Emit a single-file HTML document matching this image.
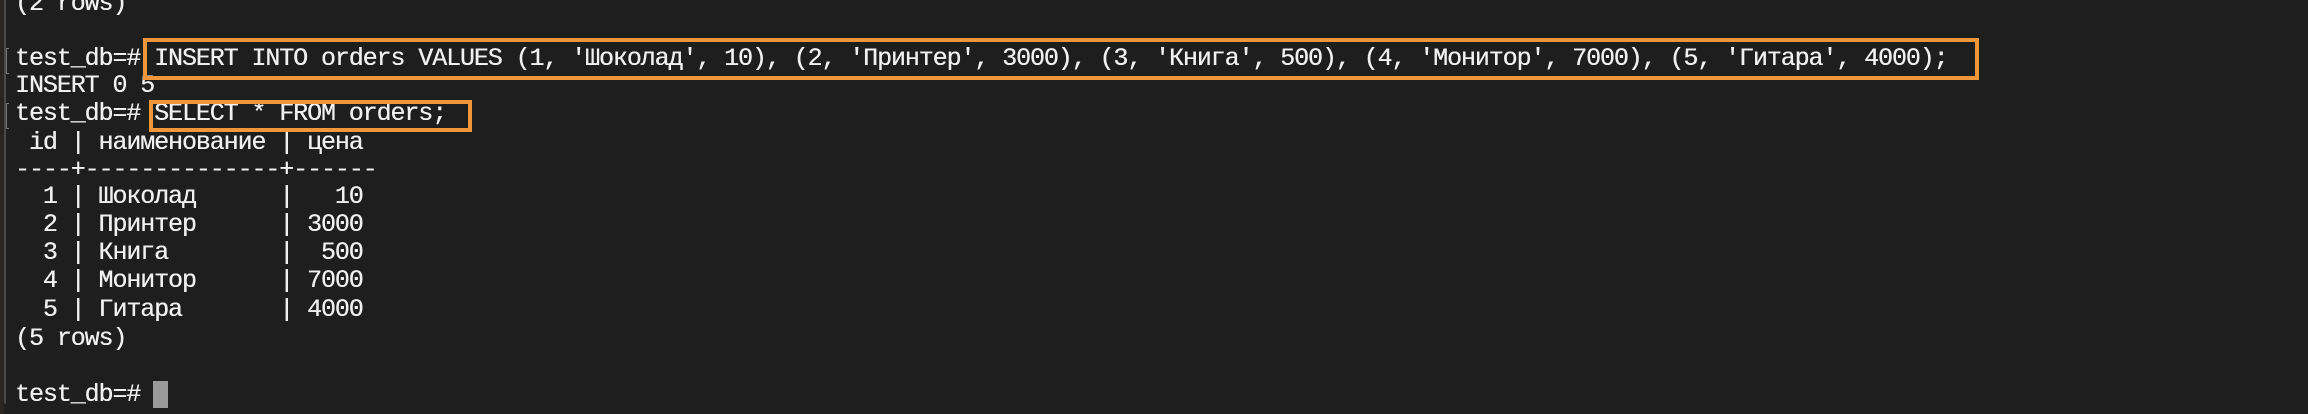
<!DOCTYPE html>
<html><head><meta charset="utf-8"><style>
html,body{margin:0;padding:0;width:2308px;height:414px;overflow:hidden;background:#1e1e1e;}
.t{position:absolute;left:15px;font-family:"Liberation Mono","DejaVu Sans Mono",monospace;font-size:25px;letter-spacing:-1.1px;color:#f0f0f0;white-space:pre;line-height:28px;text-shadow:0.3px 0 0 #f0f0f0;}
.box{position:absolute;border:4px solid #f0973a;box-sizing:border-box;}
.edge{position:absolute;left:0;top:0;width:4px;height:414px;background:#2a2520;}
.edge2{position:absolute;left:4px;top:0;width:2px;height:404px;background:#4a4a4a;border-bottom-left-radius:10px;}
.br{position:absolute;left:6px;width:3px;height:26px;border:1px solid #777;border-right:none;box-sizing:border-box;}
</style></head><body>
<div class="edge"></div><div class="edge2"></div>
<div class="t" style="top:-10px">(2 rows)</div>
<div class="br" style="top:48px"></div>
<div class="t" style="top:45px">test_db=# INSERT INTO orders VALUES (1, 'Шоколад', 10), (2, 'Принтер', 3000), (3, 'Книга', 500), (4, 'Монитор', 7000), (5, 'Гитара', 4000);</div>
<div class="t" style="top:72px">INSERT 0 5</div>
<div class="br" style="top:103px"></div>
<div class="t" style="top:100px">test_db=# SELECT * FROM orders;</div>
<div class="t" style="top:129px"> id | наименование | цена</div>
<div class="t" style="top:156px">----+--------------+------</div>
<div class="t" style="top:183px">  1 | Шоколад      |   10</div>
<div class="t" style="top:211px">  2 | Принтер      | 3000</div>
<div class="t" style="top:239px">  3 | Книга        |  500</div>
<div class="t" style="top:267px">  4 | Монитор      | 7000</div>
<div class="t" style="top:296px">  5 | Гитара       | 4000</div>
<div class="t" style="top:325px">(5 rows)</div>
<div class="t" style="top:381px">test_db=# </div>
<div style="position:absolute;left:153px;top:381px;width:15px;height:27px;background:#9a9a9a"></div>
<div class="box" style="left:143px;top:38px;width:1836px;height:42px"></div>
<div class="box" style="left:149px;top:100px;width:323px;height:32px"></div>
</body></html>
